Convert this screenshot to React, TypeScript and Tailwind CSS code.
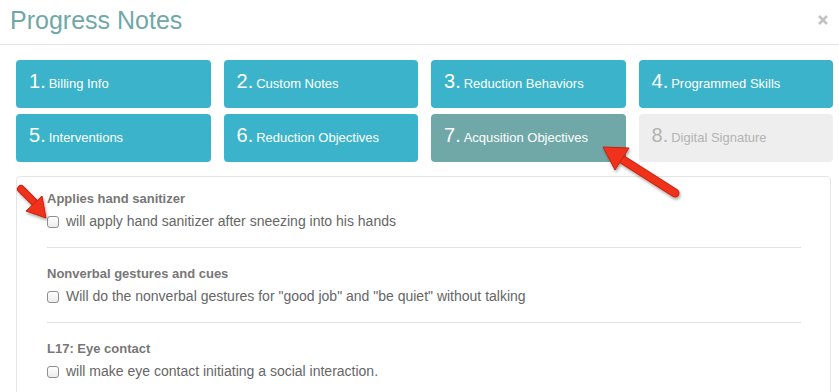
const steps = [
    { n: 1, label: 'Billing Info', state: 'default' },
    { n: 2, label: 'Custom Notes', state: 'default' },
    { n: 3, label: 'Reduction Behaviors', state: 'default' },
    { n: 4, label: 'Programmed Skills', state: 'default' },
    { n: 5, label: 'Interventions', state: 'default' },
    { n: 6, label: 'Reduction Objectives', state: 'default' },
    { n: 7, label: 'Acqusition Objectives', state: 'active' },
    { n: 8, label: 'Digital Signature', state: 'disabled' },
];

const objectives = [
    { title: 'Applies hand sanitizer', text: 'will apply hand sanitizer after sneezing into his hands' },
    { title: 'Nonverbal gestures and cues', text: 'Will do the nonverbal gestures for "good job" and "be quiet" without talking' },
    { title: 'L17: Eye contact', text: 'will make eye contact initiating a social interaction.' },
];

const stepClass = {
    default: 'bg-[#3bb3ca] text-white',
    active: 'bg-[#70a8a8] text-white',
    disabled: 'bg-[#eeeeee] text-[#b3b3b3]',
};

const Arrows = () => (
    <svg className="absolute inset-0 pointer-events-none" width="839" height="392" viewBox="0 0 839 392">
        <defs>
            <filter id="arrowShadow" x="-30%" y="-30%" width="160%" height="160%">
                <feDropShadow dx="1" dy="2" stdDeviation="1.5" floodColor="#000" floodOpacity="0.35" />
            </filter>
        </defs>
        <g filter="url(#arrowShadow)" fill="#f0321a" stroke="#c4230f" strokeWidth="1" strokeLinejoin="round">
            {/* arrow at the first checkbox */}
            <path d="M21 189 L35 203" stroke="#c4230f" strokeWidth="8" strokeLinecap="round" />
            <path d="M21 189 L35 203" stroke="#f0321a" strokeWidth="6" strokeLinecap="round" />
            <path d="M46 218 L26 211 L42 196 Z" />
            {/* arrow at tab 7 */}
            <path d="M675 193 L620 158" stroke="#c4230f" strokeWidth="9" strokeLinecap="round" />
            <path d="M675 193 L620 158" stroke="#f0321a" strokeWidth="7" strokeLinecap="round" />
            <path d="M603 147 L629 148 L615 170 Z" />
        </g>
    </svg>
);

export default function App() {
    return (
        <div className="relative w-[839px] h-[392px] overflow-hidden bg-white font-['Liberation_Sans',Arial,sans-serif]">
            <div className="h-[45px] border-b border-[#e5e5e5] flex justify-between pl-[10px] pr-[11px]">
                <h1 className="pt-[6px] text-[25px] leading-[28px] text-[#6fa8a8]">Progress Notes</h1>
                <svg className="mt-[15px]" width="10" height="10" viewBox="0 0 10 10">
                    <path d="M1 1 L9 9 M9 1 L1 9" stroke="#c2c2c2" strokeWidth="2.6" />
                </svg>
            </div>

            <div className="mt-[15px] ml-[16px] w-[817px] grid grid-cols-4 gap-x-[13px] gap-y-[6px]">
                {steps.map((step) => (
                    <div
                        key={step.n}
                        className={`h-[48px] rounded-[4px] pl-[13px] pb-[6px] flex items-center ${stepClass[step.state as keyof typeof stepClass]}`}
                    >
                        <span className="flex items-baseline leading-none">
                            <span className="text-[20px]">{step.n}.</span>
                            <span className="ml-[3px] text-[13px]">{step.label}</span>
                        </span>
                    </div>
                ))}
            </div>

            <div className="mt-[14px] ml-[16px] w-[815px] h-[260px] border border-[#e5e5e5] rounded-[4px] pt-[12px] pl-[30px] pr-[29px]">
                {objectives.map((item, index) => (
                    <div key={index}>
                        {index > 0 && <div className="mt-[15px] mb-[16px] h-px bg-[#e3e3e3]" />}
                        <p className="text-[13px] leading-[20px] font-bold text-[#777777]">{item.title}</p>
                        <label className="mt-[1px] flex items-center text-[14px] leading-[22px] text-[#666666]">
                            <span className="mt-[1px] w-[12px] h-[12px] rounded-[3px] border border-[#8f8f8f] bg-gradient-to-b from-white to-[#ececec] shrink-0" />
                            <span className="ml-[7px]">{item.text}</span>
                        </label>
                    </div>
                ))}
            </div>

            <Arrows />
        </div>
    );
}
